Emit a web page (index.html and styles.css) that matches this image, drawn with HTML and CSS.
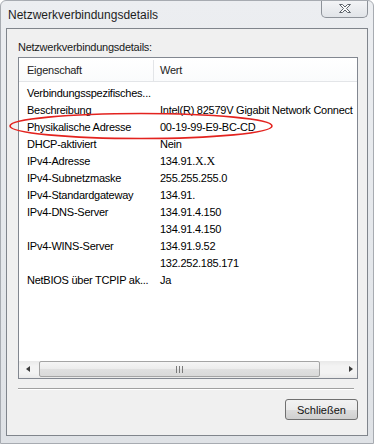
FILE: index.html
```html
<!DOCTYPE html>
<html lang="de">
<head>
	<meta charset="UTF-8">
	<title>Netzwerkverbindungsdetails</title>
	<link rel="stylesheet" href="styles.css">
</head>
<body>
	<div class="window">
		<div class="titlebar">
			<span class="title">Netzwerkverbindungsdetails</span>
			<div class="close">
				<svg width="14" height="11" viewBox="0 0 14 11">
					<path d="M1.5 1.5h3l2.5 2.5 2.5-2.5h3l-4 4 4 4h-3l-2.5-2.5-2.5 2.5h-3l4-4z" fill="#fafafa" stroke="#5e646c" stroke-width="1" stroke-linejoin="round"/>
				</svg>
			</div>
		</div>
		<div class="client">
			<div class="caption">Netzwerkverbindungsdetails:</div>
			<div class="list">
				<div class="list-head">
					<div class="col-prop">Eigenschaft</div>
					<div class="col-val">Wert</div>
				</div>
				<div class="list-body">
					<div class="row"><div class="col-prop">Verbindungsspezifisches...</div><div class="col-val"></div></div>
					<div class="row"><div class="col-prop">Beschreibung</div><div class="col-val">Intel(R) 82579V Gigabit Network Connect</div></div>
					<div class="row"><div class="col-prop">Physikalische Adresse</div><div class="col-val">00-19-99-E9-BC-CD</div></div>
					<div class="row"><div class="col-prop">DHCP-aktiviert</div><div class="col-val">Nein</div></div>
					<div class="row"><div class="col-prop">IPv4-Adresse</div><div class="col-val">134.91.<span class="edit">X.X</span></div></div>
					<div class="row"><div class="col-prop">IPv4-Subnetzmaske</div><div class="col-val">255.255.255.0</div></div>
					<div class="row"><div class="col-prop">IPv4-Standardgateway</div><div class="col-val">134.91.</div></div>
					<div class="row"><div class="col-prop">IPv4-DNS-Server</div><div class="col-val">134.91.4.150</div></div>
					<div class="row"><div class="col-prop"></div><div class="col-val">134.91.4.150</div></div>
					<div class="row"><div class="col-prop">IPv4-WINS-Server</div><div class="col-val">134.91.9.52</div></div>
					<div class="row"><div class="col-prop"></div><div class="col-val">132.252.185.171</div></div>
					<div class="row"><div class="col-prop">NetBIOS über TCPIP ak...</div><div class="col-val">Ja</div></div>
				</div>
				<div class="hscroll">
					<div class="arrow arrow-left"></div>
					<div class="track">
						<div class="thumb"><span class="grip"></span></div>
					</div>
					<div class="arrow arrow-right"></div>
				</div>
			</div>
			<div class="separator"></div>
			<div class="actions">
				<button class="btn">Schließen</button>
			</div>
		</div>
		<!-- rote Markierung -->
		<svg class="marker" width="374" height="444" viewBox="0 0 374 444">
			<ellipse cx="141" cy="126" rx="131" ry="12.5" fill="none" stroke="#e3231f" stroke-width="1.6"/>
		</svg>
	</div>
</body>
</html>
```

FILE: styles.css
```css
* {
    box-sizing: border-box;
}
body {
    margin: 0;
    font-family: "Liberation Sans", Arial, sans-serif;
    font-size: 11px;
    letter-spacing: -0.25px;
    color: #000;
    background: #fff;
}
.window {
    position: relative;
    width: 374px;
    height: 444px;
    background: linear-gradient(#eceef1, #e4e7eb 60%, #dfe2e6);
    border: 1px solid #a7abb1;
    border-radius: 6px 6px 0 0;
    overflow: hidden;
}
.titlebar {
    display: flex;
    height: 27px;
}
.title {
    padding: 7px 0 0 7px;
    font-size: 12px;
    line-height: 14px;
    letter-spacing: 0;
    color: #1e1e1e;
}
.close {
    margin-left: auto;
    margin-right: 5px;
    width: 47px;
    height: 18px;
    margin-top: -1px;
    border: 1px solid #8d9299;
    border-top: none;
    border-radius: 0 0 5px 5px;
    background: linear-gradient(#f4f5f7, #e1e4e8);
    display: flex;
    align-items: center;
    justify-content: center;
}
.client {
    margin: 0 5px 0 5px;
    height: 408px;
    border: 1px solid #80858c;
    background: #f0f0f0;
    padding: 10px 0 0 11px;
}
.caption {
    line-height: 16px;
    height: 16px;
    margin-bottom: 2px;
    color: #1a1a1a;
}
.list {
    width: 340px;
    height: 322px;
    border: 1px solid #828790;
    background: #fff;
    display: flex;
    flex-direction: column;
}
.list-head {
    display: flex;
    height: 24px;
    padding-top: 2px;
    line-height: 21px;
    border-bottom: 1px solid #e3e5e8;
    background: linear-gradient(#ffffff, #fafbfc);
    color: #222;
}
.list-head .col-prop {
    border-right: 1px solid #e3e5e8;
}
.col-prop {
    width: 135px;
    padding-left: 8px;
    white-space: nowrap;
    overflow: hidden;
}
.col-val {
    flex: 1;
    padding-left: 6px;
    white-space: nowrap;
    overflow: hidden;
}
.list-body {
    flex: 1;
    padding-top: 3px;
}
.row {
    display: flex;
    height: 17px;
    line-height: 17px;
}
.edit {
    font-family: "Liberation Serif", serif;
    font-size: 12px;
    letter-spacing: 0;
}
.hscroll {
    display: flex;
    height: 17px;
    background: linear-gradient(#e9e9e9, #f3f3f3 30%, #f3f3f3 70%, #e9e9e9);
}
.arrow {
    width: 17px;
    position: relative;
}
.arrow::after {
    content: "";
    position: absolute;
    top: 5px;
    border-top: 3.5px solid transparent;
    border-bottom: 3.5px solid transparent;
}
.arrow-left::after {
    left: 7px;
    border-right: 4px solid #3b3b3b;
}
.arrow-right::after {
    left: 9px;
    border-left: 4px solid #3b3b3b;
}
.track {
    flex: 1;
    padding: 0 3px;
}
.thumb {
    width: 281px;
    height: 16px;
    border: 1px solid #a4a4a4;
    border-radius: 2px;
    background: linear-gradient(#f5f5f5, #ececec 50%, #e0e0e0 51%, #d9d9d9);
    display: flex;
    align-items: center;
    justify-content: center;
}
.grip {
    width: 7px;
    height: 7px;
    background: repeating-linear-gradient(90deg, #7a7a7a 0 1px, transparent 1px 3px);
}
.separator {
    width: 336px;
    margin-top: 9px;
    border-top: 1px solid #a0a0a0;
    border-bottom: 1px solid #ffffff;
}
.actions {
    width: 340px;
    display: flex;
    justify-content: flex-end;
    margin-top: 9px;
}
.btn {
    width: 73px;
    height: 21px;
    padding: 0;
    font-family: "Liberation Sans", Arial, sans-serif;
    font-size: 11px;
    letter-spacing: 0;
    color: #111;
    border: 1px solid #707070;
    border-radius: 3px;
    background: linear-gradient(#f2f2f2, #ebebeb 50%, #dddddd 51%, #cfcfcf);
}
.marker {
    position: absolute;
    left: -1px;
    top: -1px;
    pointer-events: none;
}
```
